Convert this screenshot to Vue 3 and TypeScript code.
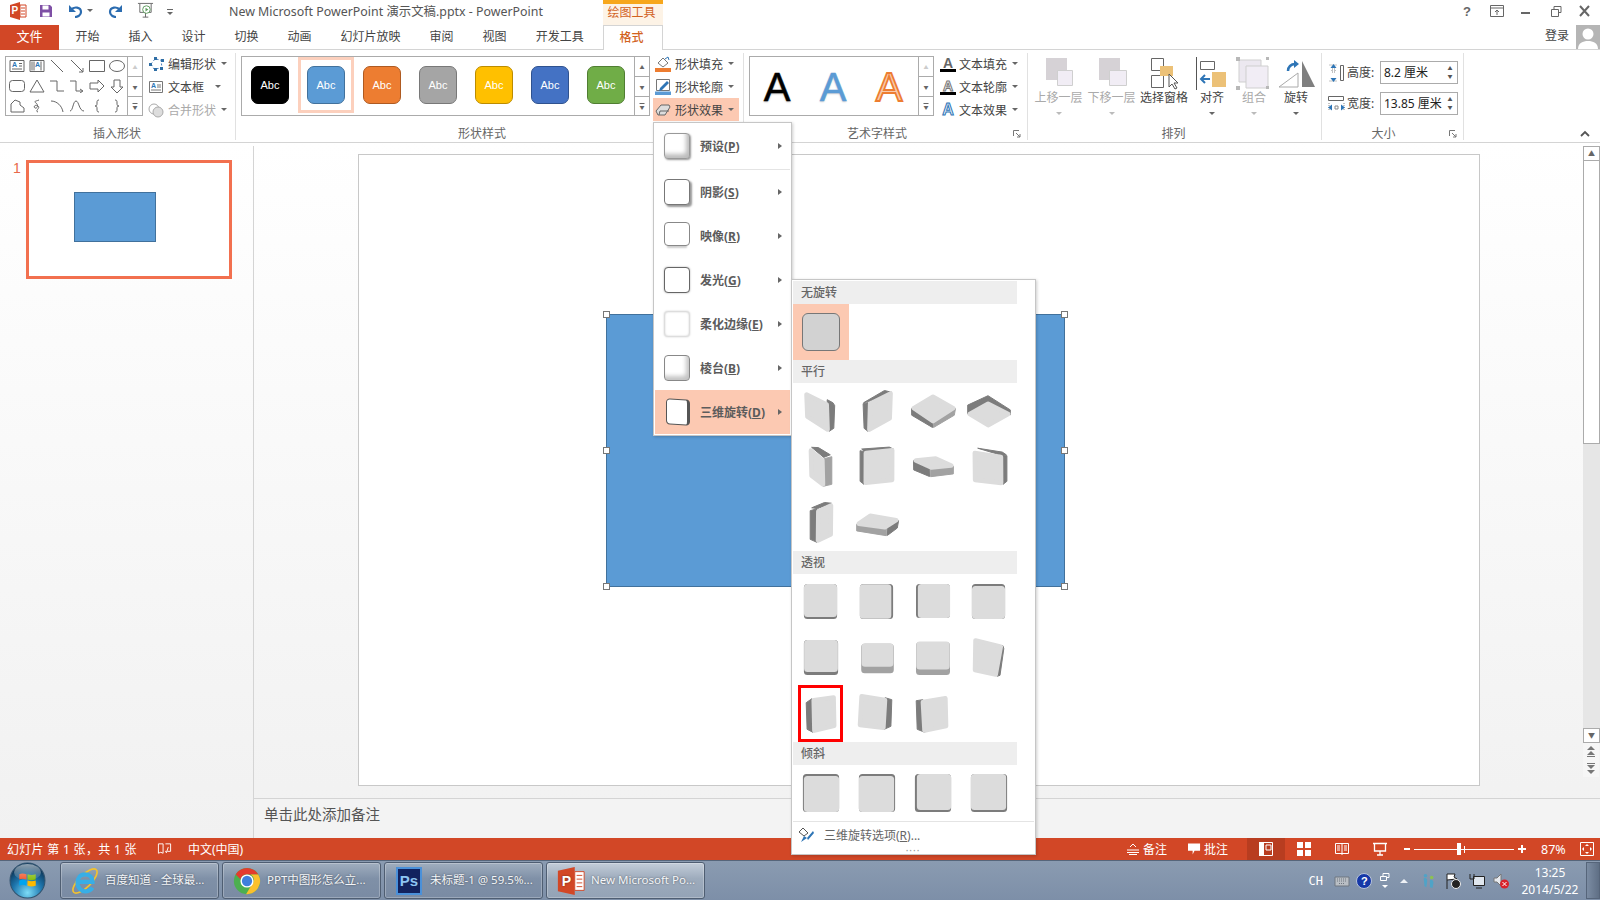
<script setup lang="ts">
type Side = { pts: string; fill: string; w: number }
type Cube = { front: string; fw: number; sides: Side[] }

const D = '#7c7c7c'
const M = '#a2a2a2'

// points for an axis aligned box
const r = (x0: number, y0: number, x1: number, y1: number) =>
  `${x0},${y0} ${x1},${y0} ${x1},${y1} ${x0},${y1}`

// faces get a fat round stroke, so pull the corners towards the middle first
const inset = (pts: string, by: number) => {
  const p = pts.split(' ').map((s) => s.split(',').map(Number))
  const cx = p.reduce((a, q) => a + q[0], 0) / p.length
  const cy = p.reduce((a, q) => a + q[1], 0) / p.length
  return p
    .map(([x, y]) => {
      const len = Math.hypot(cx - x, cy - y) || 1
      const k = (by * 1.4) / len
      return `${(x + (cx - x) * k).toFixed(1)},${(y + (cy - y) * k).toFixed(1)}`
    })
    .join(' ')
}

// skewed blocks: thin sides with slightly round corners
const cube = (front: string, ...sides: [string, string][]): Cube => ({
  front: inset(front, 2),
  fw: 4.5,
  sides: sides.map(([pts, fill]) => ({ pts: inset(pts, 0.5), fill, w: 1 })),
})

// flat blocks: the side is a full rounded box peeking out behind the face
const flat = (front: string, back: string, fill = D): Cube => ({
  front: inset(front, 3.5),
  fw: 7,
  sides: [{ pts: inset(back, 3.5), fill, w: 7 }],
})

const parallel: Cube[] = [
  cube('12,9 36,20 36,49 12,35', ['34,16 40,19 42,22 41,46 36,49 34,40', D]),
  cube('19,19 43,8 43,37 19,49', ['14,20 36,7 43,9 19,19', D], ['14,20 19,19 19,49 15,46', D]),
  cube('28,11 51,25 28,41 6,25', ['6,25 28,40 28,45 6,32', D], ['28,40 51,25 50,32 28,45', M]),
  cube('27,18 50,31 27,45 6,31', ['6,22 27,12 50,27 50,32 27,19 6,31', D]),
  cube('17,9 31,19 31,48 17,39', ['18,8 25,8 38,16 31,19', D], ['31,19 39,17 39,46 30,48', M]),
  cube('15,12 45,9 45,43 15,46', ['12,10 41,8 45,10 15,13', D], ['11,11 15,12 15,46 11,43', D]),
  cube('8,21 32,17 49,27 25,31', ['8,21 25,30 25,38 8,31', D], ['25,30 49,27 49,35 25,38', M]),
  cube('12,12 42,16 42,46 12,43', ['16,9 42,13 46,16 42,17', D], ['42,16 46,16 46,43 42,46', D]),
  cube('24,14 39,8 39,42 24,48', ['18,13 32,7 39,8 24,14', D], ['17,15 24,13 24,48 17,45', D]),
  cube('7,29 19,19 50,25 38,34', ['7,29 38,33 38,41 7,36', M], ['38,33 50,25 49,33 38,41', D]),
]

const perspective: Cube[] = [
  flat(r(11, 10, 44, 43), r(11, 10, 44, 45)),
  flat(r(11, 10, 42, 45), r(11, 10, 44, 45)),
  flat(r(13, 10, 45, 44), r(11, 10, 45, 44)),
  flat(r(11, 12, 44, 45), r(11, 10, 44, 45)),
  flat(r(11, 10, 45, 42), r(11, 10, 45, 45)),
  flat(r(12, 14, 45, 36), r(12, 14, 45, 43), M),
  flat(r(11, 12, 45, 39), r(11, 12, 45, 45), M),
  cube('13,8 42,15 36,47 12,42', ['36,15 42,15 43,18 39,46 36,47', D]),
  cube('19,12 42,9 43,42 20,47', ['13,16 19,12 20,47 14,44', D]),
  cube('11,8 38,12 36,44 9,41', ['36,11 43,13 42,41 35,44', D]),
  cube('16,14 42,10 43,42 18,47', ['11,14 18,13 20,47 12,44', D]),
]

const tilt: Cube[] = [
  flat(r(11, 11, 46, 47), r(10, 9, 46, 47)),
  flat(r(10, 11, 45, 47), r(10, 9, 46, 47)),
  flat(r(12, 9, 46, 45), r(10, 9, 46, 47)),
  flat(r(10, 9, 45, 45), r(10, 9, 46, 47)),
]

const tabs = ['开始', '插入', '设计', '切换', '动画', '幻灯片放映', '审阅', '视图', '开发工具']

const styles = [
  { bg: '#000000', edge: '#000000' },
  { bg: '#5b9bd5', edge: '#41719c', selected: true },
  { bg: '#ed7d31', edge: '#ae5a21' },
  { bg: '#a5a5a5', edge: '#787878' },
  { bg: '#ffc000', edge: '#bc8c00' },
  { bg: '#4472c4', edge: '#2f528f' },
  { bg: '#70ad47', edge: '#507e32' },
]

const menu = [
  { name: '预设', key: 'P', cls: 'ic-preset' },
  { name: '阴影', key: 'S', cls: 'ic-shadow' },
  { name: '映像', key: 'R', cls: 'ic-mirror' },
  { name: '发光', key: 'G', cls: 'ic-glow' },
  { name: '柔化边缘', key: 'E', cls: 'ic-soft' },
  { name: '棱台', key: 'B', cls: 'ic-bevel' },
  { name: '三维旋转', key: 'D', cls: 'ic-3d', active: true },
]

const shapes = [
  'M1 1.500h14v11H1z M10 4.500h3 M10 7h3 M3 10h10',
  'M1 1.500h14v11H1z M3 2.500v9 M5 2.500v9 M12 2.500v9',
  'M2 1l12 12',
  'M2 1l12 12 M14 9v4h-4',
  'M.5 1.500h15v11H.5z',
  'M15.500 7a7.500 5.500 0 1 1-15 0a7.500 5.500 0 1 1 15 0z',
  'M3.500 1.500h9a3 3 0 0 1 3 3v5a3 3 0 0 1-3 3h-9a3 3 0 0 1-3-3v-5a3 3 0 0 1 3-3z',
  'M8 1l7 12H1z',
  'M1 2h7v10h7',
  'M1 2h6v10h6 M11 10l3 2-3 2',
  'M1 4h8V1l6 6-6 6v-3H1z',
  'M5 1h6v7h3l-6 6-6-6h3z',
  'M2 13V5l4-4 5 2 0 3 4 3v4z',
  'M9 13c-4-1 3-4 0-6s-5 1-3 2 4-3 1-5 1-2 3-3',
  'M2 2c6 0 11 5 12 11',
  'M1 12C4 12 4 2 7 2s3 10 8 10',
  'M10 1C8 1 8 2 8 4s0 3-2 3c2 0 2 1 2 3s0 3 2 3',
  'M6 1c2 0 2 1 2 3s0 3 2 3c-2 0-2 1-2 3s0 3-2 3',
]

const tools = [
  { name: '上移一层', off: true },
  { name: '下移一层', off: true },
  { name: '选择窗格' },
  { name: '对齐', caret: true },
  { name: '组合', off: true, caret: true },
  { name: '旋转', caret: true },
]
</script>

<template>
  <div class="ppt">
    <header class="titlebar">
      <div class="quick">
        <svg class="q-logo" viewBox="0 0 18 18"><path d="M1 3l10-3v18L1 15z" fill="#d24726" /><path d="M11 3h6v12h-6z" fill="#fff" stroke="#d24726" /><path d="M12 6h4M12 9h4M12 12h4" stroke="#d24726" /><text x="2.500" y="12" class="q-p">P</text></svg>
        <svg class="q-save" viewBox="0 0 14 14"><path d="M1 1h10l2 2v10H1z" fill="#7e4fa5" /><path d="M3.500 1.500h6v4h-6zM3.500 8.500h7v4h-7z" fill="#fff" /></svg>
        <svg class="q-undo" viewBox="0 0 16 14"><path d="M3 6c3-4 10-3 10 2 0 3-3 5-6 5" fill="none" stroke="#2b6cb0" stroke-width="2.200" /><path d="M1 1v7h7z" fill="#2b6cb0" /></svg>
        <i class="caret" />
        <svg class="q-redo" viewBox="0 0 16 14"><path d="M13 6C10 2 3 3 3 8c0 3 3 5 6 5" fill="none" stroke="#2b6cb0" stroke-width="2.200" /><path d="M15 1v7H8z" fill="#2b6cb0" /></svg>
        <svg class="q-show" viewBox="0 0 18 18"><path d="M1 1.500h16M3 2v9h12V2M9 11v5M6 16h6" fill="none" stroke="#666" /><circle cx="10" cy="8" r="4" fill="#fff" stroke="#5a9a5a" /><path d="M9 6l3 2-3 2z" fill="#5a9a5a" /></svg>
        <i class="more" />
      </div>
      <div class="doc-title">New Microsoft PowerPoint 演示文稿.pptx - PowerPoint</div>
      <div class="context">绘图工具</div>
      <div class="winbtns">
        <span class="help">?</span>
        <svg viewBox="0 0 14 12"><path d="M.5.500h13v11H.5zM1 3h12M7 10V5M5 7l2-2 2 2" fill="none" stroke="#666" /></svg>
        <svg viewBox="0 0 14 12"><path d="M2 8h9" stroke="#666" stroke-width="2" /></svg>
        <svg viewBox="0 0 14 12"><path d="M2.500 4.500h7v7h-7zM5 4V1.500h7v6h-2" fill="none" stroke="#666" /></svg>
        <svg viewBox="0 0 14 12"><path d="M2 1l9 10M11 1l-9 10" stroke="#666" stroke-width="2" /></svg>
      </div>
    </header>

    <nav class="tabs">
      <div class="tab-file">文件</div>
      <div class="tab-list">
        <span v-for="t in tabs" :key="t" class="tab">{{ t }}</span>
      </div>
      <div class="tab-format">格式</div>
      <div class="login">登录</div>
      <div class="avatar">
        <svg viewBox="0 0 24 24"><circle cx="12" cy="9" r="5.500" fill="#fff" /><path d="M2 24c0-6 5-8 10-8s10 2 10 8z" fill="#fff" /></svg>
      </div>
    </nav>

    <section class="ribbon">
      <div class="group g-insert">
        <div class="body">
          <div class="gallery shape-gal">
            <div class="shape-grid">
              <svg v-for="(d, i) in shapes" :key="i" viewBox="0 0 16 14">
                <path :d="d" fill="none" stroke="#666" />
                <text v-if="i < 2" :x="i === 0 ? 3 : 6" y="8" class="mini-a">A</text>
              </svg>
            </div>
            <div class="scroller">
              <span class="off">▲</span><span>▼</span><span class="last">▼</span>
            </div>
          </div>
          <div class="rows">
            <div class="row"><svg viewBox="0 0 16 16"><path d="M3 8l4-5 6 1 1 8-8 1z" fill="none" stroke="#4a7ebb" stroke-dasharray="2 2" /><path d="M1 7h3v3H1zM6 1h3v3H6zM13 3h3v3h-3zM6 12h3v3H6zM12 11h3v3h-3z" fill="#2f6ea5" /></svg><span>编辑形状</span><i class="caret" /></div>
            <div class="row"><svg viewBox="0 0 16 16"><path d="M1.500 2.500h13v11h-13z" fill="#fff" stroke="#777" /><path d="M9 6h4M9 8h4M3 11h10" stroke="#777" /><text x="3" y="9" class="mini-a">A</text></svg><span>文本框</span><i class="caret far" /></div>
            <div class="row off"><svg viewBox="0 0 16 16"><circle cx="6" cy="7" r="5" fill="none" stroke="#aaa" /><circle cx="10" cy="10" r="5" fill="#ddd" stroke="#aaa" /></svg><span>合并形状</span><i class="caret" /></div>
          </div>
        </div>
        <div class="label">插入形状</div>
      </div>

      <div class="group g-styles">
        <div class="body">
          <div class="gallery style-gal">
            <div class="style-list">
              <div v-for="s in styles" :key="s.bg" class="style-cell" :class="{ selected: s.selected }">
                <div class="swatch" :style="{ background: s.bg, borderColor: s.edge }">Abc</div>
              </div>
            </div>
            <div class="scroller">
              <span>▲</span><span>▼</span><span class="last">▼</span>
            </div>
          </div>
          <div class="rows fx-rows">
            <div class="row"><svg viewBox="0 0 16 16"><path d="M3 7l5-5 5 5-5 4z" fill="#fff" stroke="#777" /><path d="M10 3l3-2 1 3" fill="none" stroke="#2e75b6" /><path d="M0 12h16v4H0z" fill="#ed7d31" /></svg><span>形状填充</span><i class="caret" /></div>
            <div class="row"><svg viewBox="0 0 16 16"><path d="M1.500 .500h13v11h-13z" fill="#fff" stroke="#777" /><path d="M5 9l7-7 2 2-7 7-3 1z" fill="#2e75b6" /><path d="M0 12.500h16V16H0z" fill="#5b9bd5" /></svg><span>形状轮廓</span><i class="caret" /></div>
            <div class="row hot"><svg viewBox="0 0 16 16"><path d="M1 9l5-6h8l1 2-5 8H3z" fill="#ddd" stroke="#666" /><path d="M4 13l1-4h9" fill="none" stroke="#666" /></svg><span>形状效果</span><i class="caret" /></div>
          </div>
        </div>
        <div class="label">形状样式</div>
      </div>

      <div class="group g-art">
        <div class="body">
          <div class="gallery art-gal">
            <div class="art-list">
              <span class="art a-black">A</span>
              <span class="art a-blue">A</span>
              <span class="art a-orange">A</span>
            </div>
            <div class="scroller">
              <span class="off">▲</span><span>▼</span><span class="last">▼</span>
            </div>
          </div>
          <div class="rows art-rows">
            <div class="row"><span class="txt-ic"><b class="gray">A</b><i /></span><span>文本填充</span><i class="caret" /></div>
            <div class="row"><span class="txt-ic"><b class="hollow">A</b><i /></span><span>文本轮廓</span><i class="caret" /></div>
            <div class="row"><span class="txt-ic"><b class="bluefx">A</b></span><span>文本效果</span><i class="caret" /></div>
          </div>
        </div>
        <div class="label">艺术字样式<svg class="launch" viewBox="0 0 8 8"><path d="M.5 6V.5H6M3 3l4 4M7 4v3H4" fill="none" stroke="#777" /></svg></div>
      </div>

      <div class="group g-arrange">
        <div class="body tools">
          <div v-for="(t, i) in tools" :key="t.name" class="tool" :class="{ off: t.off }">
            <svg viewBox="0 0 44 34">
              <template v-if="i === 0">
                <path d="M9 1h21v22H9z" fill="#d6d2d6" /><path d="M20.500 13.500h15v15h-15z" fill="#f1edf5" stroke="#cfcfcf" />
              </template>
              <template v-else-if="i === 1">
                <path d="M9 1h21v22H9z" fill="#d6d2d6" /><path d="M19.500 13.500h17v15h-17z" fill="#f1edf5" stroke="#cfcfcf" />
              </template>
              <template v-else-if="i === 2">
                <path d="M9.500 1.500h12v12h-12zM9.500 18.500h12v12h-12z" fill="#fff" stroke="#666" /><path d="M18 9h13v10H18z" fill="#ecc177" /><path d="M27 17v13l3-3 3 5 2-1-3-5h4z" fill="#fff" stroke="#555" />
              </template>
              <template v-else-if="i === 3">
                <path d="M6.500 0v33" stroke="#555" /><path d="M10.500 4.500h14v8h-14z" fill="#fff" stroke="#666" /><path d="M22 15h14v15H22z" fill="#ecc177" /><path d="M20 22H11M15 18l-4 4 4 4" fill="none" stroke="#2e75b6" stroke-width="2" />
              </template>
              <template v-else-if="i === 4">
                <path d="M7 3h22v22H7z" fill="#ece8f0" stroke="#cfcfcf" /><path d="M14 9h22v22H14z" fill="#f1edf5" stroke="#cfcfcf" /><path d="M4 0h4v4H4zM34 0h3v3h-3zM4 29h4v4H4zM34 29h3v3h-3z" fill="#b8b8b8" />
              </template>
              <template v-else>
                <path d="M5 30l19-14v14z" fill="#fff" stroke="#aaa" /><path d="M28 4l13 26H28z" fill="#7f7f7f" /><path d="M14 14c0-4 3-7 7-7" fill="none" stroke="#2e75b6" stroke-width="2.500" /><path d="M20 3l5 4-5 4z" fill="#2e75b6" />
              </template>
            </svg>
            <span class="tool-name">{{ t.name }}</span>
            <i class="caret" :class="{ hide: !t.off && !t.caret }" />
          </div>
        </div>
        <div class="label">排列</div>
      </div>

      <div class="group g-size">
        <div class="body size-body">
          <div class="size-row">
            <svg viewBox="0 0 17 18"><path d="M12.500 1.500h3v15h-3z" fill="none" stroke="#666" /><path d="M1.500 1h8M1.500 17h8M4 5h3v3H4z" fill="none" stroke="#888" stroke-dasharray="1 1" /><path d="M5.500 0l3 4h-6zM5.500 18l3-4h-6z" fill="#2e75b6" /></svg>
            <span>高度:</span>
            <div class="spin"><span>8.2 厘米</span><em><i>▲</i><i>▼</i></em></div>
          </div>
          <div class="size-row">
            <svg viewBox="0 0 17 18"><path d="M.5 1.500h15v4H.5z" fill="none" stroke="#666" /><path d="M1 8v8M16 8v8" stroke="#888" stroke-dasharray="1 1" /><path d="M7 11h3v3H7z" fill="none" stroke="#888" /><path d="M0 12.500l4-3v6zM17 12.500l-4-3v6z" fill="#2e75b6" /></svg>
            <span>宽度:</span>
            <div class="spin"><span>13.85 厘米</span><em><i>▲</i><i>▼</i></em></div>
          </div>
        </div>
        <div class="label">大小<svg class="launch" viewBox="0 0 8 8"><path d="M.5 6V.5H6M3 3l4 4M7 4v3H4" fill="none" stroke="#777" /></svg></div>
      </div>

      <div class="collapse">
        <svg viewBox="0 0 10 7"><path d="M1 6l4-4 4 4" fill="none" stroke="#555" stroke-width="1.800" /></svg>
      </div>
    </section>

    <main class="workspace">
      <aside class="thumbs">
        <span class="thumb-no">1</span>
        <div class="thumb"><div class="thumb-shape" /></div>
      </aside>
      <div class="editor">
        <div class="editor-top">
          <div class="stage">
            <div class="slide">
              <div class="shape">
                <i class="h tl" /><i class="h tc" /><i class="h tr" />
                <i class="h ml" /><i class="h mr" />
                <i class="h bl" /><i class="h bc" /><i class="h br" />
              </div>
            </div>
          </div>
          <div class="vscroll">
            <span class="sb-btn">▲</span>
            <span class="sb-thumb" />
            <span class="sb-track" />
            <span class="sb-btn">▼</span>
            <svg class="sb-page" viewBox="0 0 16 17"><path d="M8 3l4 4H4zM8 8l4 4H4z M4 13h8v1H4z" fill="#777" /></svg>
            <svg class="sb-page" viewBox="0 0 16 17"><path d="M4 3h8v1H4zM4 5h8l-4 4zM4 10h8l-4 4z" fill="#777" /></svg>
          </div>
        </div>
        <div class="notes">单击此处添加备注</div>
      </div>
    </main>

    <footer class="status">
      <span class="st-a">幻灯片 第 1 张，共 1 张</span>
      <svg class="st-book" viewBox="0 0 16 14"><path d="M1.500 1.500h5v10l-2.500-1-2.500 1zM9 1.500h5.500v8H11M12 5l-2 6-1-2" fill="none" stroke="#fff" /></svg>
      <span>中文(中国)</span>
      <div class="st-right">
        <svg class="s-note" viewBox="0 0 14 12"><path d="M4 4l3-3 3 3M1 7h12M1 9.500h12M3 11.500h8" fill="none" stroke="#fff" /></svg>
        <span class="s-lab">备注</span>
        <svg class="s-com" viewBox="0 0 14 12"><path d="M0 0h13v8H7l-2 4V8H0z" fill="#fff" /></svg>
        <span class="s-lab">批注</span>
        <div class="v-normal"><svg viewBox="0 0 14 14"><path d="M0 0h5v14H0z" fill="#fff" /><path d="M.5.500h13v13H.5zM7 3h5v5H7z" fill="none" stroke="#fff" /></svg></div>
        <svg class="v-icon" viewBox="0 0 14 14"><path d="M0 0h6v6H0zM8 0h6v6H8zM0 8h6v6H0zM8 8h6v6H8z" fill="#fff" /></svg>
        <svg class="v-icon" viewBox="0 0 14 14"><path d="M.5 1.500h13v10H.5zM7 1v12M2 4h3M2 6h3M2 8h3M9 4h3M9 6h3M9 8h3" fill="none" stroke="#fff" /></svg>
        <svg class="v-icon" viewBox="0 0 14 14"><path d="M0 1.500h14M1.500 2v7h11V2M7 9v4M4 13h6" fill="none" stroke="#fff" stroke-width="1.300" /></svg>
        <span class="z-minus" />
        <div class="slider"><span class="tick" /><span class="knob" /></div>
        <span class="z-plus" />
        <span class="z-pct">87%</span>
        <svg class="z-fit" viewBox="0 0 14 14"><path d="M.5.500h13v13H.5z" fill="none" stroke="#fff" /><path d="M7 2l2 2H5zM7 12l2-2H5zM2 7l2-2v4zM12 7l-2-2v4z" fill="#fff" /></svg>
      </div>
    </footer>

    <div class="taskbar">
      <div class="orb">
        <svg viewBox="0 0 36 36">
          <defs>
            <radialGradient id="orb" cx="50%" cy="85%" r="75%"><stop offset="0" stop-color="#7ddcf7" /><stop offset="0.55" stop-color="#1f78b0" /><stop offset="1" stop-color="#0b3558" /></radialGradient>
            <linearGradient id="gloss" x1="0" y1="0" x2="0" y2="1"><stop offset="0" stop-color="#fff" stop-opacity="0.55" /><stop offset="1" stop-color="#fff" stop-opacity="0.05" /></linearGradient>
          </defs>
          <circle cx="18" cy="18" r="17" fill="url(#orb)" stroke="#31536f" />
          <path d="M10 12c2-1 4-1 7 0v5c-3-1-5-1-7 0z" fill="#f25022" /><path d="M18 12c3 1 5 1 8 0v5c-3 1-5 1-8 0z" fill="#7fba00" /><path d="M10 18c2-1 4-1 7 0v5c-3-1-5-1-7 0z" fill="#00a4ef" /><path d="M18 18c3 1 5 1 8 0v5c-3 1-5 1-8 0z" fill="#ffb900" />
          <ellipse cx="18" cy="10" rx="13" ry="8" fill="url(#gloss)" />
        </svg>
      </div>
      <div class="task">
        <svg viewBox="0 0 32 32"><ellipse cx="16" cy="16" rx="17" ry="6.500" transform="rotate(-45 16 16)" fill="none" stroke="#f2c230" stroke-width="1.800" /><path d="M9 17h15c0-5-3-8-8-8s-8 4-8 9 4 9 8 9c3 0 6-1 8-4" fill="none" stroke="#38aee6" stroke-width="4.500" /></svg>
        <span>百度知道 - 全球最...</span>
      </div>
      <div class="task">
        <svg viewBox="0 0 32 32"><circle cx="16" cy="16" r="14" fill="#4caf50" /><path d="M4 9a14 14 0 0 1 24 0H16a7 7 0 0 0-7 5z" fill="#e33b2e" /><path d="M28 9a14 14 0 0 1-13 21l6-10a7 7 0 0 0-1-11z" fill="#fbc02d" /><circle cx="16" cy="16" r="7" fill="#fff" /><circle cx="16" cy="16" r="5.500" fill="#3f7fdc" /></svg>
        <span>PPT中图形怎么立...</span>
      </div>
      <div class="task">
        <div class="ps">Ps</div>
        <span>未标题-1 @ 59.5%...</span>
      </div>
      <div class="task active">
        <svg viewBox="0 0 32 32"><path d="M2 5l18-4v30L2 27z" fill="#d24726" /><path d="M20 6h10v20H20z" fill="#fff" stroke="#d24726" /><path d="M22 10h6M22 14h6M22 18h6M22 22h6" stroke="#d24726" /><text x="6" y="21" class="tp">P</text></svg>
        <span>New Microsoft Po...</span>
      </div>
      <div class="tray">
        <span class="ch">CH</span>
        <svg class="t16 tight" viewBox="0 0 16 16"><path d="M1 4h14v9H1z" fill="#b9bec4" stroke="#6e7680" /><path d="M3 6h10M3 8h10M5 10.500h6" stroke="#6e7680" stroke-dasharray="1 1" /></svg>
        <svg class="t16 tight" viewBox="0 0 16 16"><circle cx="8" cy="8" r="7.500" fill="#1538a8" stroke="#b8c4da" /><text x="5" y="12" class="tq">?</text></svg>
        <div class="tray-mini"><svg viewBox="0 0 10 8"><path d="M.5 3.500h6v4h-6zM3 3V.5h6v4H7" fill="none" stroke="#fff" /></svg><i /></div>
        <i class="tray-up" />
        <svg class="t16" viewBox="0 0 16 18"><path d="M2 6c2-1 4 0 4 3l-1 7-2-1zM9 8c2-1 4 0 4 3l-1 6-3-1z" fill="#4fa3c7" /><circle cx="4" cy="3" r="2" fill="#4fa3c7" /><circle cx="11" cy="5" r="2" fill="#8cc152" /></svg>
        <svg class="t16" viewBox="0 0 16 16"><path d="M2 1v15M2 1h8l-1 3 3 2-10 1" fill="#fff" stroke="#222" /><circle cx="11" cy="11" r="4.500" fill="#222" stroke="#eee" /></svg>
        <svg class="t16" viewBox="0 0 16 16"><path d="M4.500 3.500h11v9h-11z" fill="#dfe6ee" stroke="#222" /><path d="M7 15h6M1 1v5h4V1" fill="none" stroke="#222" /></svg>
        <svg class="t16" viewBox="0 0 16 16"><path d="M1 5h3l4-4v12L4 9H1z" fill="#e6e9ee" stroke="#777" /><circle cx="11.500" cy="11" r="4.500" fill="#d8232a" /><path d="M9.500 9l4 4M13.500 9l-4 4" stroke="#fff" /></svg>
        <div class="clock"><span>13:25</span><span>2014/5/22</span></div>
        <div class="desktop" />
      </div>
    </div>

    <!-- effects menu -->
    <div class="menu">
      <div v-for="m in menu" :key="m.key" class="menu-item" :class="{ active: m.active }">
        <span class="m-ic" :class="m.cls" />
        <span class="m-name">{{ m.name }}(<u>{{ m.key }}</u>)</span>
        <i class="m-arrow" />
      </div>
    </div>

    <!-- 3d rotation gallery -->
    <div class="submenu">
      <div class="sec">无旋转</div>
      <div class="cells">
        <div class="cell on"><span class="flat" /></div>
      </div>
      <div class="sec">平行</div>
      <div class="cells">
        <div v-for="(c, i) in parallel" :key="i" class="cell">
          <svg viewBox="0 0 56 56">
            <polygon v-for="(s, j) in c.sides" :key="j" :points="s.pts" :fill="s.fill" :stroke="s.fill" :stroke-width="s.w" class="edge" />
            <polygon :points="c.front" :stroke-width="c.fw" class="face" />
          </svg>
        </div>
      </div>
      <div class="sec">透视</div>
      <div class="cells">
        <div v-for="(c, i) in perspective" :key="i" class="cell" :class="{ marked: i === 8 }">
          <svg viewBox="0 0 56 56">
            <polygon v-for="(s, j) in c.sides" :key="j" :points="s.pts" :fill="s.fill" :stroke="s.fill" :stroke-width="s.w" class="edge" />
            <polygon :points="c.front" :stroke-width="c.fw" class="face" />
          </svg>
        </div>
      </div>
      <div class="sec">倾斜</div>
      <div class="cells">
        <div v-for="(c, i) in tilt" :key="i" class="cell">
          <svg viewBox="0 0 56 56">
            <polygon v-for="(s, j) in c.sides" :key="j" :points="s.pts" :fill="s.fill" :stroke="s.fill" :stroke-width="s.w" class="edge" />
            <polygon :points="c.front" :stroke-width="c.fw" class="face" />
          </svg>
        </div>
      </div>
      <div class="options">
        <svg viewBox="0 0 18 18"><path d="M2 6l4-4 5 5-4 3z" fill="#fff" stroke="#555" /><path d="M4 16l3-6 3 2zM10 12l6-7 1 2-6 7z" fill="#2e75b6" /></svg>
        <span>三维旋转选项(<u>R</u>)...</span>
      </div>
      <div class="dots">····</div>
    </div>
  </div>
</template>

<style>
html,
body {
  margin: 0;
  overflow: hidden;
  background: #fff;
}
</style>

<style scoped>
.ppt {
  position: relative;
  width: 1600px;
  height: 900px;
  overflow: hidden;
  display: flex;
  flex-direction: column;
  font-family: "Noto Sans", "Noto Sans CJK SC", sans-serif;
  font-size: 12px;
  color: #444;
  background: #fff;
}

/* title bar */
.titlebar {
  height: 25px;
  display: flex;
  align-items: center;
}
.quick {
  width: 229px;
  display: flex;
  align-items: center;
  padding: 0 0 4px 9px;
  box-sizing: border-box;
}
.q-logo { width: 18px; height: 18px; }
.q-save { width: 14px; height: 14px; margin-left: 12px; }
.q-undo { width: 16px; height: 14px; margin-left: 15px; }
.quick .caret { margin-left: 3px; }
.q-redo { width: 16px; height: 14px; margin-left: 14px; }
.q-show { width: 17px; height: 17px; margin-left: 14px; }
.more {
  position: relative;
  width: 6px;
  height: 1px;
  margin: -3px 0 0 13px;
  background: #666;
}
.more::after {
  content: "";
  position: absolute;
  left: 0;
  top: 3px;
  border-left: 3px solid transparent;
  border-right: 3px solid transparent;
  border-top: 3px solid #666;
}
.q-p { font: 700 10px "Liberation Sans", sans-serif; fill: #fff; }
.doc-title {
  width: 374px;
  padding-bottom: 3px;
  font-size: 12.400px;
  color: #555;
  white-space: nowrap;
}
.context {
  width: 60px;
  height: 25px;
  box-sizing: border-box;
  border-top: 4px solid #f7a71c;
  padding-right: 3px;
  background: #fdf3e6;
  color: #d2621e;
  text-align: center;
  line-height: 18px;
  font-size: 12px;
}
.winbtns {
  margin-left: auto;
  display: flex;
  align-items: center;
  gap: 15.500px;
  padding: 0 8px 3px 0;
}
.winbtns svg { width: 14px; height: 12px; }
.help { width: 14px; font: 700 13px "Liberation Sans", sans-serif; color: #666; text-align: center; }

/* tabs */
.tabs {
  height: 25px;
  display: flex;
  align-items: stretch;
  box-sizing: border-box;
  border-bottom: 1px solid #d4d4d4;
}
.tab-file {
  width: 59px;
  height: 25px;
  background: #d24726;
  color: #fff;
  font-size: 13px;
  line-height: 23px;
  text-align: center;
}
.tab-list { display: flex; width: 544px; padding-left: 2px; box-sizing: border-box; }
.tab { padding: 0 14.500px; line-height: 24px; color: #444; white-space: nowrap; }
.tab-format {
  width: 60px;
  height: 25px;
  box-sizing: border-box;
  border: 1px solid #d4d4d4;
  border-bottom: 0;
  padding-right: 3px;
  background: #fff;
  color: #d2621e;
  text-align: center;
  line-height: 23px;
  font-weight: 500;
}
.login { margin-left: auto; margin-right: 7px; line-height: 22px; color: #444; }
.avatar { width: 24px; height: 24px; background: #b5b5b5; overflow: hidden; }
.avatar svg { display: block; width: 24px; height: 24px; }

/* ribbon */
.ribbon {
  height: 93px;
  box-sizing: border-box;
  padding-top: 3px;
  display: flex;
  border-bottom: 1px solid #d4d4d4;
}
.group {
  height: 87px;
  box-sizing: border-box;
  border-right: 1px solid #e1e1e1;
  position: relative;
}
.g-insert { width: 236px; padding-left: 5px; }
.g-styles { width: 508px; padding-left: 5px; }
.g-art { width: 284px; padding-left: 5px; }
.g-arrange { width: 294px; padding-left: 4px; }
.g-size { width: 142px; }
.body { height: 72px; display: flex; }
.label { height: 15px; line-height: 18px; text-align: center; color: #666; }
.g-insert .label { padding-right: 6px; }
.g-styles .label { padding-right: 20px; }
.g-art .label { padding-right: 22px; }
.g-arrange .label { padding-right: 6px; }
.g-size .label { padding-right: 18px; }
.launch { position: absolute; right: 6px; bottom: 2px; width: 8px; height: 8px; }
.gallery {
  margin-top: 3px;
  height: 60px;
  box-sizing: border-box;
  border: 1px solid #ababab;
  display: flex;
}
.shape-gal { width: 138px; }
.style-gal { width: 409px; }
.art-gal { width: 185px; }
.scroller {
  width: 14px;
  margin-left: auto;
  flex: none;
  border-left: 1px solid #ababab;
  display: flex;
  flex-direction: column;
  font-size: 5px;
  color: #666;
  text-align: center;
}
.scroller span { height: 20px; line-height: 20px; border-bottom: 1px solid #ababab; box-sizing: border-box; }
.scroller .last { border-bottom: 0; text-decoration: overline; }
.scroller .off { color: #ccc; }
.shape-grid {
  display: grid;
  grid-template-columns: repeat(6, 20px);
  grid-auto-rows: 20px;
  margin-top: -1px;
  padding-left: 1px;
  align-items: center;
  justify-items: center;
}
.shape-grid svg { width: 16px; height: 14px; }
.mini-a { font: 700 7px "Liberation Sans", sans-serif; fill: #2e75b6; }
.rows { margin: -1px 0 0 3px; display: flex; flex-direction: column; }
.row {
  height: 23px;
  display: flex;
  align-items: center;
  color: #444;
  white-space: nowrap;
  box-sizing: border-box;
  padding-left: 2px;
  width: 86px;
}
.row svg { width: 16px; height: 16px; margin-right: 4px; flex: none; }
.row .caret { margin-left: 5px; }
.row .far { margin-left: 11px; }
.row.off { color: #aaa; }
.row.hot { background: #fcc9b2; }
.fx-rows { margin-left: 3px; }
.art-rows { margin-left: 4px; }
.caret {
  display: inline-block;
  width: 0;
  height: 0;
  border-left: 3px solid transparent;
  border-right: 3px solid transparent;
  border-top: 3px solid #666;
}
.hide { visibility: hidden; }
.style-list { display: flex; }
.style-cell {
  width: 56px;
  height: 56px;
  box-sizing: border-box;
  display: flex;
  align-items: center;
  justify-content: center;
}
.style-cell.selected { border: 3px solid #fcd0bd; }
.swatch {
  width: 38px;
  height: 38px;
  box-sizing: border-box;
  border: 1px solid;
  border-radius: 7px;
  color: #fff;
  font: 11px/36px "Liberation Sans", sans-serif;
  text-align: center;
}
.art-list { flex: 1; display: flex; margin-left: -1px; }
.art {
  width: 56px;
  text-align: center;
  font: 40px/61px "Liberation Sans", sans-serif;
}
.a-black { color: #000; -webkit-text-stroke: 0.500px #000; text-shadow: 0 1px 2px rgba(0, 0, 0, 0.3); }
.a-blue { color: #5b9bd5; -webkit-text-stroke: 0.500px #5b9bd5; text-shadow: 0 1px 2px rgba(0, 0, 0, 0.2); }
.a-orange { color: #f8cbad; -webkit-text-stroke: 1.800px #ed7d31; }
.txt-ic {
  width: 16px;
  height: 16px;
  margin-right: 3px;
  position: relative;
  text-align: center;
  flex: none;
}
.txt-ic b { display: block; font: 700 14px/14px "Liberation Sans", sans-serif; }
.txt-ic i { position: absolute; left: 0; right: 0; bottom: 0; height: 3px; background: #000; }
.gray { color: #666; }
.hollow { color: #fff; -webkit-text-stroke: 1px #777; }
.bluefx { color: #eaf2fa; -webkit-text-stroke: 1px #2e75b6; font-size: 16px !important; line-height: 16px !important; }
.tools {
  display: grid;
  grid-template-columns: 53px 53px 52px 44px 40px 44px;
}
.tool {
  display: flex;
  flex-direction: column;
  align-items: center;
  padding-top: 4px;
  white-space: nowrap;
  color: #444;
}
.tool svg { width: 44px; height: 34px; }
.tool-name { margin-top: -2px; line-height: 18px; }
.tool .caret { margin-top: 5px; }
.tool.off { color: #aaa; }
.tool.off .caret { border-top-color: #bbb; }
.size-body { flex-direction: column; box-sizing: border-box; padding: 8px 0 0 6px; }
.size-row { height: 31px; display: flex; align-items: flex-start; }
.size-row svg { width: 17px; height: 18px; margin-top: 3px; }
.size-row > span { margin-left: 2px; line-height: 23px; width: 33px; white-space: nowrap; }
.spin {
  width: 78px;
  height: 23px;
  box-sizing: border-box;
  border: 1px solid #ababab;
  display: flex;
  padding-left: 3px;
  line-height: 21px;
  color: #222;
  white-space: nowrap;
}
.spin em { margin-left: auto; width: 14px; font-style: normal; font-size: 5px; color: #555; display: flex; flex-direction: column; padding-top: 2px; }
.spin em i { font-style: normal; line-height: 8px; text-align: center; }
.collapse { margin-left: auto; align-self: flex-end; padding: 0 10px 0 0; height: 12px; }
.collapse svg { display: block; width: 10px; height: 7px; }

/* workspace */
.workspace { height: 695px; display: flex; background: linear-gradient(#fff, #f1f1f1); }
.thumbs {
  width: 254px;
  box-sizing: border-box;
  border-right: 1px solid #d4d4d4;
  margin-top: 3px;
  padding: 14px 0 0 13px;
  display: flex;
}
.thumb-no { width: 13px; font: 14px/16px "Liberation Sans", sans-serif; color: #e8694a; }
.thumb {
  width: 206px;
  height: 119px;
  box-sizing: border-box;
  border: 3px solid #f2704f;
  background: #fff;
  padding: 29px 0 0 45px;
}
.thumb-shape { width: 82px; height: 50px; box-sizing: border-box; background: #5b9bd5; border: 1px solid #41719c; }
.editor { flex: 1; display: flex; flex-direction: column; }
.editor-top { flex: 1; display: flex; }
.stage { flex: 1; padding: 11px 0 0 104px; }
.slide {
  width: 1122px;
  height: 632px;
  box-sizing: border-box;
  border: 1px solid #c8c8c8;
  background: #fff;
  position: relative;
}
.shape {
  position: absolute;
  left: 247px;
  top: 159px;
  width: 459px;
  height: 273px;
  box-sizing: border-box;
  background: #5b9bd5;
  border: 1px solid #41719c;
}
.h {
  position: absolute;
  width: 7px;
  height: 7px;
  box-sizing: border-box;
  background: #fff;
  border: 1px solid #777;
}
.tl { left: -4px; top: -4px; }
.tc { left: 50%; top: -4px; margin-left: -4px; }
.tr { right: -4px; top: -4px; }
.ml { left: -4px; top: 50%; margin-top: -4px; }
.mr { right: -4px; top: 50%; margin-top: -4px; }
.bl { left: -4px; bottom: -4px; }
.bc { left: 50%; bottom: -4px; margin-left: -4px; }
.br { right: -4px; bottom: -4px; }
.vscroll {
  width: 17px;
  margin-top: 3px;
  padding-bottom: 21px;
  box-sizing: border-box;
  display: flex;
  flex-direction: column;
  font-size: 7px;
  text-align: center;
  color: #666;
}
.sb-btn { height: 15px; line-height: 14px; box-sizing: border-box; border: 1px solid #ababab; background: #fff; }
.sb-thumb { height: 283px; box-sizing: border-box; border: 1px solid #ababab; border-top: 0; background: #fff; }
.sb-track { flex: 1; background: #e6e6e6; }
.sb-page { width: 16px; height: 17px; display: block; background: #f6f6f6; }
.notes {
  height: 40px;
  box-sizing: border-box;
  border-top: 1px solid #d4d4d4;
  background: #f3f3f3;
  padding-left: 10px;
  font-size: 14.500px;
  line-height: 31px;
  color: #555;
}

/* status bar */
.status {
  height: 22px;
  background: #d24726;
  color: #fff;
  display: flex;
  align-items: center;
  padding-left: 7px;
  white-space: nowrap;
}
.st-a { width: 150px; letter-spacing: 0.300px; }
.st-book { width: 15px; height: 14px; margin-right: 16px; }
.st-right { margin-left: auto; display: flex; align-items: center; height: 22px; }
.s-note { width: 14px; height: 12px; }
.s-com { width: 13px; height: 12px; margin-left: 21px; }
.s-lab { margin-left: 3px; }
.v-normal { width: 38px; height: 22px; margin-left: 19px; background: #b83d20; display: flex; align-items: center; justify-content: center; }
.v-normal svg { width: 14px; height: 14px; }
.v-icon { width: 14px; height: 14px; margin-left: 12px; }
.v-icon + .v-icon { margin-left: 24px; }
.z-minus { width: 6px; height: 2px; margin-left: 17px; background: #fff; }
.slider { position: relative; width: 100px; height: 1px; margin-left: 4px; background: #fff; }
.knob { position: absolute; left: 43px; top: -6px; width: 4px; height: 12px; background: #fff; }
.tick { position: absolute; left: 50px; top: -3px; width: 1px; height: 7px; background: #fff; }
.z-plus { position: relative; width: 8px; height: 2px; margin-left: 4px; background: #fff; }
.z-plus::after { content: ""; position: absolute; left: 3px; top: -3px; width: 2px; height: 8px; background: #fff; }
.z-pct { margin-left: 15px; width: 39px; font-size: 12.500px; }
.z-fit { width: 14px; height: 14px; margin-right: 6px; }

/* taskbar */
.taskbar {
  height: 40px;
  box-sizing: border-box;
  border-top: 1px solid #56657a;
  background: linear-gradient(#8a9bb1, #7d8fa8);
  display: flex;
  align-items: center;
}
.orb { width: 54px; margin-right: 6px; display: flex; justify-content: center; }
.orb svg { width: 37px; height: 37px; }
.task {
  width: 159px;
  height: 37px;
  margin-right: 3px;
  box-sizing: border-box;
  border: 1px solid #4f5e72;
  border-radius: 3px;
  background: linear-gradient(#a0aebf, #7f90a7 45%, #7a8ba3);
  box-shadow: inset 0 0 0 1px rgba(255, 255, 255, 0.25);
  display: flex;
  align-items: center;
  padding-left: 9px;
  color: #f4f6f9;
  font-size: 11.500px;
  white-space: nowrap;
  text-shadow: 0 0 2px rgba(0, 0, 0, 0.5);
}
.task span { margin-top: -3px; }
.task svg { width: 30px; height: 30px; flex: none; margin-right: 5px; }
.task.active { background: linear-gradient(#c3cdd9, #9dabbc 45%, #94a3b6); }
.ps {
  width: 26px;
  height: 28px;
  margin: 0 8px 0 2px;
  flex: none;
  box-sizing: border-box;
  border: 2px solid #4a90d9;
  background: #12225e;
  color: #8ec5f2;
  font: 700 15px/24px "Liberation Sans", sans-serif;
  text-align: center;
  text-shadow: none;
}
.tp { font: 700 15px "Liberation Sans", sans-serif; fill: #fff; }
.tq { font: 700 11px "Liberation Sans", sans-serif; fill: #fff; }
.tray { margin-left: auto; display: flex; align-items: center; height: 39px; color: #fff; }
.ch { font: 12px "DejaVu Sans Mono", monospace; margin-right: 11px; }
.t16 { width: 16px; height: 16px; margin-right: 8px; }
.t16.tight { margin-right: 6px; }
.tray-mini { width: 10px; margin-left: 2px; margin-right: 10px; display: flex; flex-direction: column; align-items: center; gap: 4px; }
.tray-mini svg { width: 10px; height: 8px; }
.tray-mini i { border-left: 3px solid transparent; border-right: 3px solid transparent; border-top: 3px solid #fff; }
.tray-up { margin-right: 13px; border-left: 4px solid transparent; border-right: 4px solid transparent; border-bottom: 4px solid #eef1f5; }
.clock { width: 66px; display: flex; flex-direction: column; align-items: center; font-size: 12px; line-height: 17px; }
.desktop { width: 14px; height: 37px; margin-left: 3px; box-sizing: border-box; border: 1px solid #56657a; background: linear-gradient(90deg, #7b8ca3, #5f6f85); }

/* menus */
.menu {
  position: absolute;
  left: 653px;
  top: 122px;
  width: 139px;
  height: 314px;
  box-sizing: border-box;
  padding: 2px 1px 0;
  background: #fff;
  border: 1px solid #c6c6c6;
  box-shadow: 1px 1px 3px rgba(0, 0, 0, 0.2);
}
.menu-item {
  height: 44px;
  display: flex;
  align-items: center;
  position: relative;
  padding-left: 9px;
}
.menu-item:first-child { height: 45px; padding-bottom: 3px; box-sizing: border-box; }
.menu-item:first-child::after {
  content: "";
  position: absolute;
  left: 45px;
  right: 0;
  bottom: 0;
  height: 1px;
  background: #e4e4e4;
}
.menu-item.active { background: #fcc9b2; }
.m-ic {
  width: 26px;
  height: 26px;
  box-sizing: border-box;
  border: 1px solid #777;
  border-radius: 4px;
  background: #fff;
}
.ic-preset { border-color: #999; box-shadow: inset -3px -4px 4px #bdbdbd, 1px 1px 2px #999; }
.ic-shadow { box-shadow: 2px 2px 2px #999; }
.ic-mirror { height: 24px; margin-top: -5px; border-color: #888; box-shadow: 0 5px 2px -3px #ccc; }
.ic-glow { border: 1.500px solid #666; box-shadow: 0 0 2px #aaa; }
.ic-soft { border: 1.500px solid #ddd; box-shadow: inset 0 0 2px #ccc, 0 0 2px #ccc; }
.ic-bevel { border-color: #888; box-shadow: inset -3px -4px 4px #c4c4c4; }
.ic-3d { width: 24px; margin-left: 2px; border: 1.500px solid #555; border-right-width: 3px; transform: skewY(4deg); }
.m-name { margin-left: 10px; font-weight: 700; color: #5c5c5c; white-space: nowrap; }
.m-arrow {
  position: absolute;
  left: 123px;
  border-top: 3.500px solid transparent;
  border-bottom: 3.500px solid transparent;
  border-left: 4px solid #666;
}
.submenu {
  position: absolute;
  left: 791px;
  top: 279px;
  width: 245px;
  height: 576px;
  box-sizing: border-box;
  padding: 1px 0 0 1px;
  background: #fff;
  border: 1px solid #c6c6c6;
  box-shadow: 1px 1px 3px rgba(0, 0, 0, 0.2);
}
.sec {
  width: 224px;
  height: 23px;
  box-sizing: border-box;
  padding-left: 8px;
  background: #eee;
  color: #666;
  font-weight: 500;
  line-height: 23px;
}
.cells { display: grid; grid-template-columns: repeat(4, 56px); grid-auto-rows: 56px; }
.cell { position: relative; }
.cell svg { display: block; width: 56px; height: 56px; filter: blur(0.300px); }
.cell.on { background: #fcc9b2; display: flex; align-items: center; justify-content: center; }
.flat { width: 38px; height: 38px; box-sizing: border-box; border: 1px solid #777; border-radius: 6px; background: #d2d2d2; }
.cell.marked::after {
  content: "";
  position: absolute;
  left: 5px;
  top: -1px;
  width: 45px;
  height: 57px;
  box-sizing: border-box;
  border: 3px solid #f00;
}
.edge { stroke-linejoin: round; }
.face { fill: #dcdcdc; stroke: #dcdcdc; stroke-linejoin: round; }
.options {
  height: 26px;
  margin-right: 1px;
  box-sizing: border-box;
  border-top: 1px solid #e4e4e4;
  display: flex;
  align-items: center;
  padding: 0 0 0 4px;
  color: #666;
}
.options svg { width: 18px; height: 18px; margin-right: 9px; }
.dots { text-align: center; line-height: 6px; color: #999; letter-spacing: 1px; font-size: 10px; margin-right: 2px; }
</style>
